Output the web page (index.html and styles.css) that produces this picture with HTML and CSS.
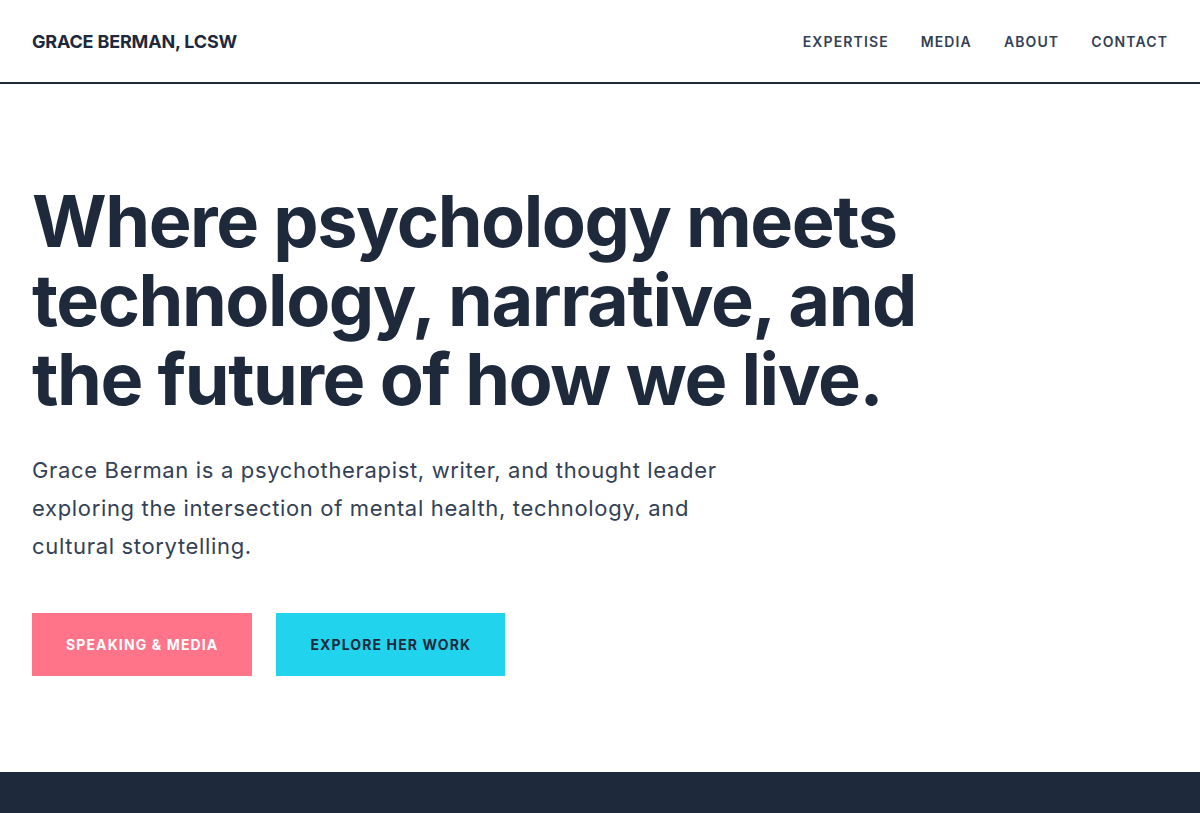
FILE: index.html
```
<!DOCTYPE html>
<html lang="en">
<head>
<meta charset="utf-8">
<title>Grace Berman, LCSW</title>
<link rel="stylesheet" href="styles.css">
</head>
<body>
<header class="site-header">
  <a class="logo" href="#">GRACE BERMAN, LCSW</a>
  <nav class="nav">
    <a href="#">EXPERTISE</a>
    <a href="#">MEDIA</a>
    <a href="#">ABOUT</a>
    <a href="#">CONTACT</a>
  </nav>
</header>
<main>
  <section class="hero">
    <h1 class="hero-title">Where psychology meets<br>technology, narrative, and<br>the future of how we live.</h1>
    <p class="hero-lead">Grace Berman is a psychotherapist, writer, and thought leader<br>exploring the intersection of mental health, technology, and<br>cultural storytelling.</p>
    <div class="hero-actions">
      <a class="btn btn-pink" href="#">SPEAKING &amp; MEDIA</a>
      <a class="btn btn-cyan" href="#">EXPLORE HER WORK</a>
    </div>
  </section>
  <section class="dark-band"></section>
</main>
</body>
</html>
```
FILE: styles.css
```
* { box-sizing: border-box; }
html, body { margin: 0; padding: 0; }
body {
  font-family: Inter, "Liberation Sans", sans-serif;
  color: #1e293b;
  background: #ffffff;
}
a { text-decoration: none; color: inherit; }

.site-header {
  height: 84px;
  padding: 0 32px;
  display: flex;
  align-items: center;
  justify-content: space-between;
  border-bottom: 2px solid #1e293b;
}
.logo {
  font-size: 18px;
  font-weight: 700;
  letter-spacing: -0.01em;
  color: #1e293b;
}
.nav {
  display: flex;
  gap: 32px;
}
.nav a {
  font-size: 14px;
  font-weight: 600;
  letter-spacing: 0.08em;
  color: #334155;
}

.hero {
  padding: 97px 32px 96px;
}
.hero-title {
  margin: 0;
  font-size: 72px;
  line-height: 1.1;
  font-weight: 700;
  letter-spacing: -0.02em;
  color: #1e293b;
}
.hero-lead {
  margin: 32px 0 0;
  font-size: 22px;
  line-height: 38px;
  letter-spacing: 0.03em;
  color: #334155;
  font-weight: 400;
}
.hero-actions {
  margin-top: 48px;
  display: flex;
  gap: 24px;
}
.btn {
  display: inline-block;
  padding: 22px 34px;
  font-size: 14px;
  line-height: 19px;
  font-weight: 700;
  letter-spacing: 0.08em;
}
.btn-pink { background: #ff7489; color: #ffffff; }
.btn-cyan { background: #22d3ee; color: #1e293b; }

.dark-band {
  height: 41px;
  background: #1e293b;
}
```
